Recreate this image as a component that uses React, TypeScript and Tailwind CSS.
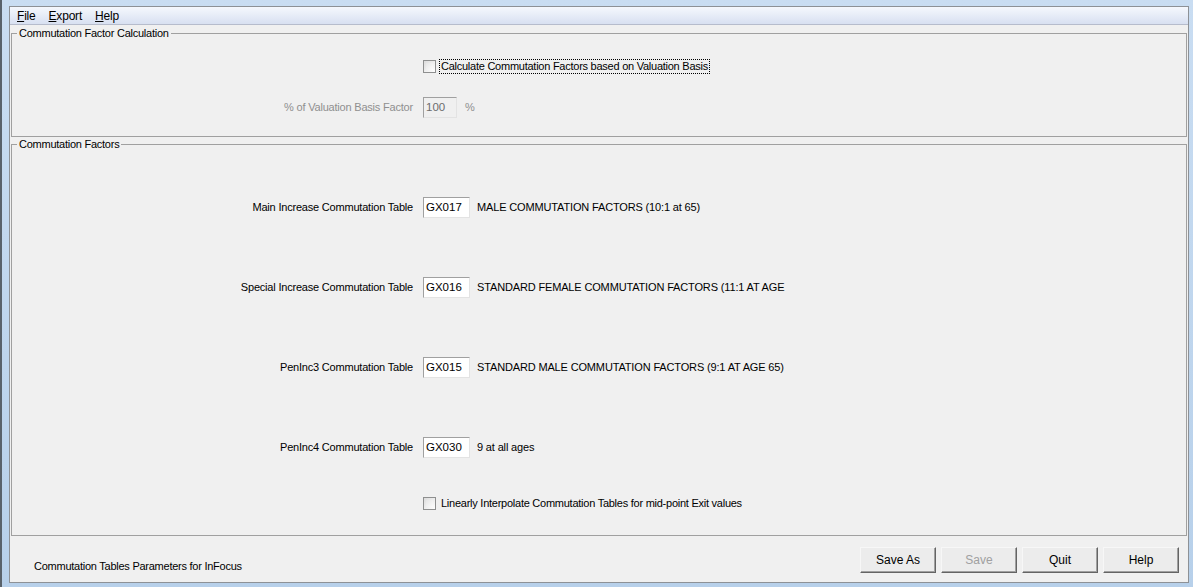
const font = { fontFamily: '"Liberation Sans", Arial, sans-serif' }

function Check({ label, focused }: { label: string; focused?: boolean }) {
  return (
    <div className="flex h-[17px] items-center">
      <div className="ml-[411px] h-[13px] w-[13px] border border-[#8e8f8f] bg-gradient-to-br from-[#dcdcdc] to-white p-[2px]">
        <div className="h-full w-full bg-gradient-to-br from-[#e6e6e6] to-[#fbfbfb]" />
      </div>
      <span
        className={`ml-[3px] px-[1px] text-[11px] leading-[13px] tracking-[-0.25px] text-black ${
          focused ? 'border border-dotted border-black' : 'border border-transparent'
        }`}
      >
        {label}
      </span>
    </div>
  )
}

function TableRow({ label, code, desc, className }: { label: string; code: string; desc: string; className: string }) {
  return (
    <div className={`flex h-[21px] items-center ${className}`}>
      <span className="w-[401px] text-right text-[11px] tracking-[-0.2px] text-black">{label}</span>
      <div className="ml-[10px] flex h-[21px] w-[47px] items-center border border-t-[#a0a0a0] border-l-[#a0a0a0] border-b-[#e3e3e3] border-r-[#e3e3e3] bg-white pl-[2px] text-[11.5px] text-black">
        {code}
      </div>
      <span className="ml-[7px] text-[11px] tracking-[-0.15px] text-black">{desc}</span>
    </div>
  )
}

function Btn({ label, disabled }: { label: string; disabled?: boolean }) {
  return (
    <button
      className={`h-[26px] w-[76px] border border-t-[#f7f7f7] border-l-[#f7f7f7] border-b-[#646464] border-r-[#646464] bg-[#ececec] text-[12px] shadow-[inset_-1px_-1px_0_#a0a0a0] ${
        disabled ? 'text-[#a0a0a0]' : 'text-black'
      }`}
    >
      {label}
    </button>
  )
}

export default function App() {
  return (
    <div
      style={font}
      className="flex h-[587px] w-[1193px] overflow-hidden border-l-[2px] border-l-[#59626b] bg-gradient-to-b from-[#c9ddf2] to-[#b7d0ea] pt-[6px] pr-[4px] pb-[4px] pl-[7px]"
    >
      <div className="flex flex-1 flex-col border border-[#8d9196] bg-[#f0f0f0]">
        {/* menu bar */}
        <div className="flex h-[18px] items-center border-b border-[#b6bccc] bg-gradient-to-b from-[#f5f8fd] to-[#d8e0f1] pl-[7px] text-[12px] tracking-[-0.2px] text-black">
          <span className="mr-[13px]"><u>F</u>ile</span>
          <span className="mr-[13px]"><u>E</u>xport</span>
          <span><u>H</u>elp</span>
        </div>

        {/* group 1 */}
        <fieldset className="mx-[1px] mt-[2px] h-[110px] border border-[#a0a0a0] p-0">
          <legend className="ml-[5px] px-[2px] text-[11px] leading-[13px] tracking-[-0.25px] text-black">Commutation Factor Calculation</legend>
          <div className="mt-[18px]">
            <Check label="Calculate Commutation Factors based on Valuation Basis" focused />
          </div>
          <div className="mt-[22px] flex h-[21px] items-center">
            <span className="w-[401px] text-right text-[11px] tracking-[-0.2px] text-[#8f8f8f]">% of Valuation Basis Factor</span>
            <div className="ml-[10px] flex h-[21px] w-[34px] items-center border border-t-[#a0a0a0] border-l-[#a0a0a0] border-b-[#e3e3e3] border-r-[#e3e3e3] bg-[#f0f0f0] pl-[2px] text-[11.5px] text-[#6d6d6d]">
              100
            </div>
            <span className="ml-[8px] text-[11px] text-[#8f8f8f]">%</span>
          </div>
        </fieldset>

        {/* group 2 */}
        <fieldset className="mx-[1px] mt-[1px] h-[398px] border border-[#a0a0a0] p-0">
          <legend className="ml-[5px] px-[2px] text-[11px] leading-[13px] tracking-[-0.25px] text-black">Commutation Factors</legend>
          <TableRow className="mt-[46px]" label="Main Increase Commutation Table" code="GX017" desc="MALE COMMUTATION FACTORS (10:1 at 65)" />
          <TableRow className="mt-[59px]" label="Special Increase Commutation Table" code="GX016" desc="STANDARD FEMALE COMMUTATION FACTORS (11:1 AT AGE" />
          <TableRow className="mt-[59px]" label="PenInc3 Commutation Table" code="GX015" desc="STANDARD MALE COMMUTATION FACTORS (9:1 AT AGE 65)" />
          <TableRow className="mt-[59px]" label="PenInc4 Commutation Table" code="GX030" desc="9 at all ages" />
          <div className="mt-[37px]">
            <Check label="Linearly Interpolate Commutation Tables for mid-point Exit values" />
          </div>
        </fieldset>

        {/* footer */}
        <div className="flex flex-1 items-start pt-[11px] pr-[9px]">
          <span className="mt-[11px] pl-[24px] text-[11px] tracking-[-0.25px] text-black">Commutation Tables Parameters for InFocus</span>
          <div className="ml-auto flex gap-[5px]">
            <Btn label="Save As" />
            <Btn label="Save" disabled />
            <Btn label="Quit" />
            <Btn label="Help" />
          </div>
        </div>
      </div>
    </div>
  )
}
